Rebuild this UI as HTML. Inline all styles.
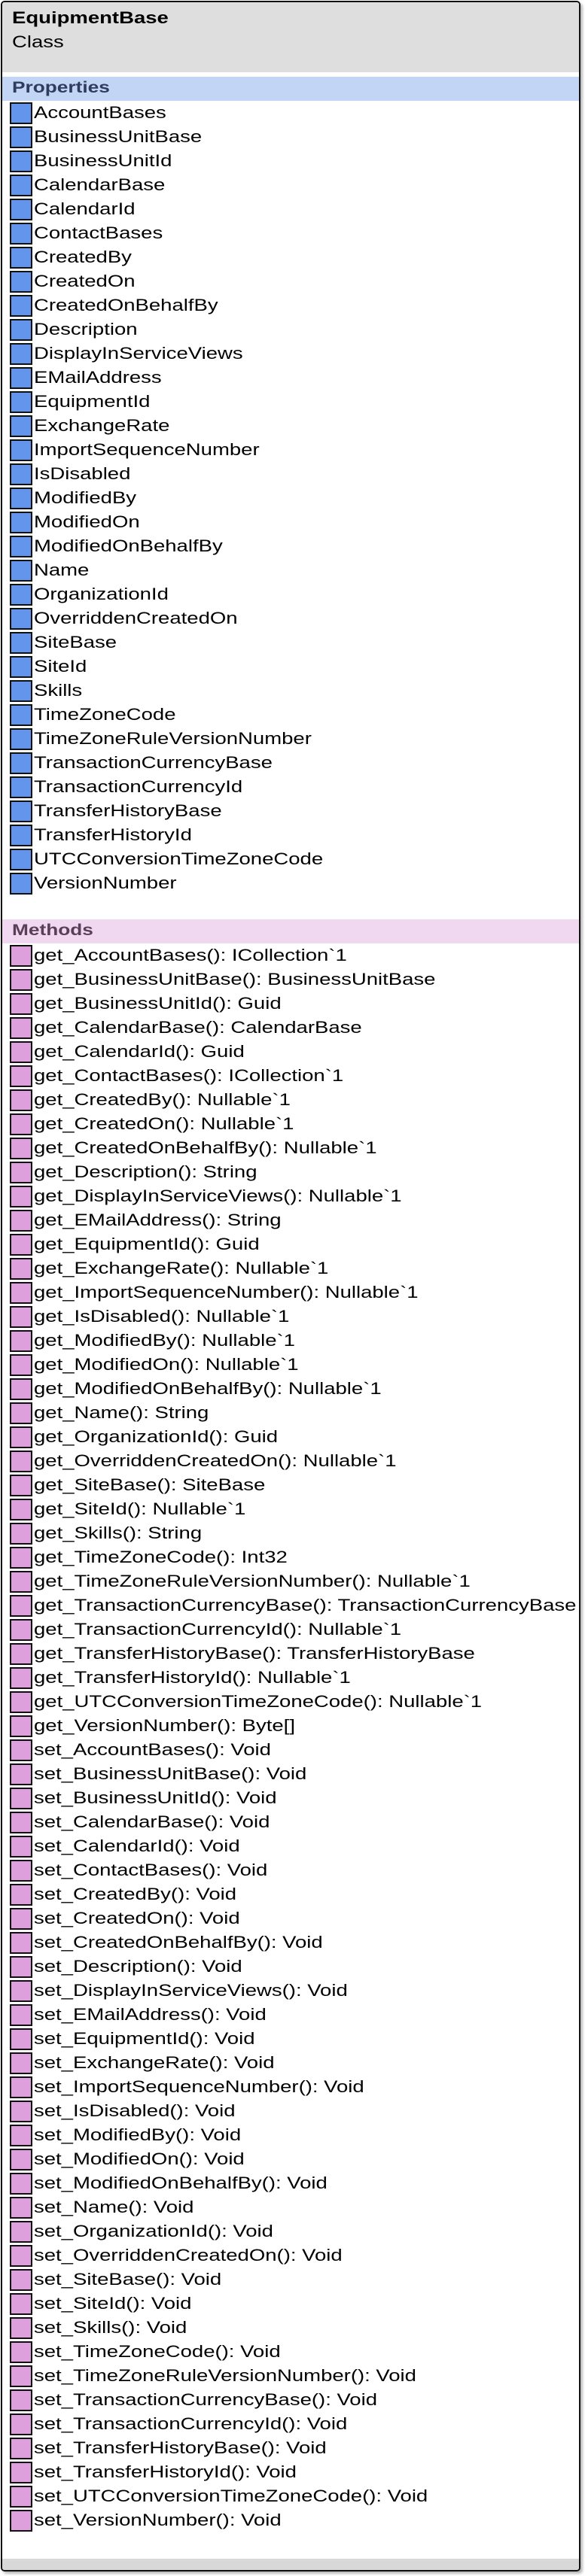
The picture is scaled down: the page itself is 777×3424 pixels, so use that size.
<!DOCTYPE html>
<html><head><meta charset="utf-8"><style>
*{margin:0;padding:0;box-sizing:border-box}
body{width:777px;height:3424px;background:#fff;position:relative;overflow:hidden;font-family:"Liberation Sans",Arial,sans-serif}
#box{position:absolute;left:1px;top:1px;width:770px;height:3417px;border:2px solid #111;border-radius:5px;background:#fff;box-shadow:3px 3px 3px #bbb;overflow:hidden}
.t{position:absolute;white-space:nowrap;transform:scaleX(1.25);transform-origin:0 0}
#hd{position:absolute;left:0;top:0;right:0;height:93px;background:#dedede}
#ft{position:absolute;left:0;bottom:0;right:0;height:15px;background:#d8d8d8}
.sec{position:absolute;left:0;right:0;height:32px}
.sec .t{left:13px;top:3px;font-weight:bold;font-size:21px}
.l{position:absolute;left:0;top:132px}
.r{position:relative;height:32px}
.i{position:absolute;left:10px;top:1px;width:30px;height:29px;border:2px solid #111}
.r .t{left:42px;top:2px;font-size:22px;color:#000;line-height:26px;transform:scaleX(1.25)}
.p .i{background:#6495ed}
.m .i{background:#dda0dd}
</style></head><body>
<div id="box">
<div id="hd"><div class="t" style="left:13px;top:8px;font-weight:bold;font-size:22px">EquipmentBase</div><div class="t" style="left:13px;top:40px;font-size:22px">Class</div></div>
<div class="sec" style="top:99px;background:#c2d5f5;color:#2e3c5e"><div class="t">Properties</div></div>
<div class="l p">
<div class="r"><div class="i"></div><div class="t">AccountBases</div></div>
<div class="r"><div class="i"></div><div class="t">BusinessUnitBase</div></div>
<div class="r"><div class="i"></div><div class="t">BusinessUnitId</div></div>
<div class="r"><div class="i"></div><div class="t">CalendarBase</div></div>
<div class="r"><div class="i"></div><div class="t">CalendarId</div></div>
<div class="r"><div class="i"></div><div class="t">ContactBases</div></div>
<div class="r"><div class="i"></div><div class="t">CreatedBy</div></div>
<div class="r"><div class="i"></div><div class="t">CreatedOn</div></div>
<div class="r"><div class="i"></div><div class="t">CreatedOnBehalfBy</div></div>
<div class="r"><div class="i"></div><div class="t">Description</div></div>
<div class="r"><div class="i"></div><div class="t">DisplayInServiceViews</div></div>
<div class="r"><div class="i"></div><div class="t">EMailAddress</div></div>
<div class="r"><div class="i"></div><div class="t">EquipmentId</div></div>
<div class="r"><div class="i"></div><div class="t">ExchangeRate</div></div>
<div class="r"><div class="i"></div><div class="t">ImportSequenceNumber</div></div>
<div class="r"><div class="i"></div><div class="t">IsDisabled</div></div>
<div class="r"><div class="i"></div><div class="t">ModifiedBy</div></div>
<div class="r"><div class="i"></div><div class="t">ModifiedOn</div></div>
<div class="r"><div class="i"></div><div class="t">ModifiedOnBehalfBy</div></div>
<div class="r"><div class="i"></div><div class="t">Name</div></div>
<div class="r"><div class="i"></div><div class="t">OrganizationId</div></div>
<div class="r"><div class="i"></div><div class="t">OverriddenCreatedOn</div></div>
<div class="r"><div class="i"></div><div class="t">SiteBase</div></div>
<div class="r"><div class="i"></div><div class="t">SiteId</div></div>
<div class="r"><div class="i"></div><div class="t">Skills</div></div>
<div class="r"><div class="i"></div><div class="t">TimeZoneCode</div></div>
<div class="r"><div class="i"></div><div class="t">TimeZoneRuleVersionNumber</div></div>
<div class="r"><div class="i"></div><div class="t">TransactionCurrencyBase</div></div>
<div class="r"><div class="i"></div><div class="t">TransactionCurrencyId</div></div>
<div class="r"><div class="i"></div><div class="t">TransferHistoryBase</div></div>
<div class="r"><div class="i"></div><div class="t">TransferHistoryId</div></div>
<div class="r"><div class="i"></div><div class="t">UTCConversionTimeZoneCode</div></div>
<div class="r"><div class="i"></div><div class="t">VersionNumber</div></div>
</div>
<div class="sec" style="top:1219px;background:#f0d9f0;color:#5a3f5a"><div class="t">Methods</div></div>
<div class="l m" style="top:1252px">
<div class="r"><div class="i"></div><div class="t">get_AccountBases(): ICollection`1</div></div>
<div class="r"><div class="i"></div><div class="t">get_BusinessUnitBase(): BusinessUnitBase</div></div>
<div class="r"><div class="i"></div><div class="t">get_BusinessUnitId(): Guid</div></div>
<div class="r"><div class="i"></div><div class="t">get_CalendarBase(): CalendarBase</div></div>
<div class="r"><div class="i"></div><div class="t">get_CalendarId(): Guid</div></div>
<div class="r"><div class="i"></div><div class="t">get_ContactBases(): ICollection`1</div></div>
<div class="r"><div class="i"></div><div class="t">get_CreatedBy(): Nullable`1</div></div>
<div class="r"><div class="i"></div><div class="t">get_CreatedOn(): Nullable`1</div></div>
<div class="r"><div class="i"></div><div class="t">get_CreatedOnBehalfBy(): Nullable`1</div></div>
<div class="r"><div class="i"></div><div class="t">get_Description(): String</div></div>
<div class="r"><div class="i"></div><div class="t">get_DisplayInServiceViews(): Nullable`1</div></div>
<div class="r"><div class="i"></div><div class="t">get_EMailAddress(): String</div></div>
<div class="r"><div class="i"></div><div class="t">get_EquipmentId(): Guid</div></div>
<div class="r"><div class="i"></div><div class="t">get_ExchangeRate(): Nullable`1</div></div>
<div class="r"><div class="i"></div><div class="t">get_ImportSequenceNumber(): Nullable`1</div></div>
<div class="r"><div class="i"></div><div class="t">get_IsDisabled(): Nullable`1</div></div>
<div class="r"><div class="i"></div><div class="t">get_ModifiedBy(): Nullable`1</div></div>
<div class="r"><div class="i"></div><div class="t">get_ModifiedOn(): Nullable`1</div></div>
<div class="r"><div class="i"></div><div class="t">get_ModifiedOnBehalfBy(): Nullable`1</div></div>
<div class="r"><div class="i"></div><div class="t">get_Name(): String</div></div>
<div class="r"><div class="i"></div><div class="t">get_OrganizationId(): Guid</div></div>
<div class="r"><div class="i"></div><div class="t">get_OverriddenCreatedOn(): Nullable`1</div></div>
<div class="r"><div class="i"></div><div class="t">get_SiteBase(): SiteBase</div></div>
<div class="r"><div class="i"></div><div class="t">get_SiteId(): Nullable`1</div></div>
<div class="r"><div class="i"></div><div class="t">get_Skills(): String</div></div>
<div class="r"><div class="i"></div><div class="t">get_TimeZoneCode(): Int32</div></div>
<div class="r"><div class="i"></div><div class="t">get_TimeZoneRuleVersionNumber(): Nullable`1</div></div>
<div class="r"><div class="i"></div><div class="t">get_TransactionCurrencyBase(): TransactionCurrencyBase</div></div>
<div class="r"><div class="i"></div><div class="t">get_TransactionCurrencyId(): Nullable`1</div></div>
<div class="r"><div class="i"></div><div class="t">get_TransferHistoryBase(): TransferHistoryBase</div></div>
<div class="r"><div class="i"></div><div class="t">get_TransferHistoryId(): Nullable`1</div></div>
<div class="r"><div class="i"></div><div class="t">get_UTCConversionTimeZoneCode(): Nullable`1</div></div>
<div class="r"><div class="i"></div><div class="t">get_VersionNumber(): Byte[]</div></div>
<div class="r"><div class="i"></div><div class="t">set_AccountBases(): Void</div></div>
<div class="r"><div class="i"></div><div class="t">set_BusinessUnitBase(): Void</div></div>
<div class="r"><div class="i"></div><div class="t">set_BusinessUnitId(): Void</div></div>
<div class="r"><div class="i"></div><div class="t">set_CalendarBase(): Void</div></div>
<div class="r"><div class="i"></div><div class="t">set_CalendarId(): Void</div></div>
<div class="r"><div class="i"></div><div class="t">set_ContactBases(): Void</div></div>
<div class="r"><div class="i"></div><div class="t">set_CreatedBy(): Void</div></div>
<div class="r"><div class="i"></div><div class="t">set_CreatedOn(): Void</div></div>
<div class="r"><div class="i"></div><div class="t">set_CreatedOnBehalfBy(): Void</div></div>
<div class="r"><div class="i"></div><div class="t">set_Description(): Void</div></div>
<div class="r"><div class="i"></div><div class="t">set_DisplayInServiceViews(): Void</div></div>
<div class="r"><div class="i"></div><div class="t">set_EMailAddress(): Void</div></div>
<div class="r"><div class="i"></div><div class="t">set_EquipmentId(): Void</div></div>
<div class="r"><div class="i"></div><div class="t">set_ExchangeRate(): Void</div></div>
<div class="r"><div class="i"></div><div class="t">set_ImportSequenceNumber(): Void</div></div>
<div class="r"><div class="i"></div><div class="t">set_IsDisabled(): Void</div></div>
<div class="r"><div class="i"></div><div class="t">set_ModifiedBy(): Void</div></div>
<div class="r"><div class="i"></div><div class="t">set_ModifiedOn(): Void</div></div>
<div class="r"><div class="i"></div><div class="t">set_ModifiedOnBehalfBy(): Void</div></div>
<div class="r"><div class="i"></div><div class="t">set_Name(): Void</div></div>
<div class="r"><div class="i"></div><div class="t">set_OrganizationId(): Void</div></div>
<div class="r"><div class="i"></div><div class="t">set_OverriddenCreatedOn(): Void</div></div>
<div class="r"><div class="i"></div><div class="t">set_SiteBase(): Void</div></div>
<div class="r"><div class="i"></div><div class="t">set_SiteId(): Void</div></div>
<div class="r"><div class="i"></div><div class="t">set_Skills(): Void</div></div>
<div class="r"><div class="i"></div><div class="t">set_TimeZoneCode(): Void</div></div>
<div class="r"><div class="i"></div><div class="t">set_TimeZoneRuleVersionNumber(): Void</div></div>
<div class="r"><div class="i"></div><div class="t">set_TransactionCurrencyBase(): Void</div></div>
<div class="r"><div class="i"></div><div class="t">set_TransactionCurrencyId(): Void</div></div>
<div class="r"><div class="i"></div><div class="t">set_TransferHistoryBase(): Void</div></div>
<div class="r"><div class="i"></div><div class="t">set_TransferHistoryId(): Void</div></div>
<div class="r"><div class="i"></div><div class="t">set_UTCConversionTimeZoneCode(): Void</div></div>
<div class="r"><div class="i"></div><div class="t">set_VersionNumber(): Void</div></div>
</div>
<div id="ft"></div>
</div>
</body></html>
